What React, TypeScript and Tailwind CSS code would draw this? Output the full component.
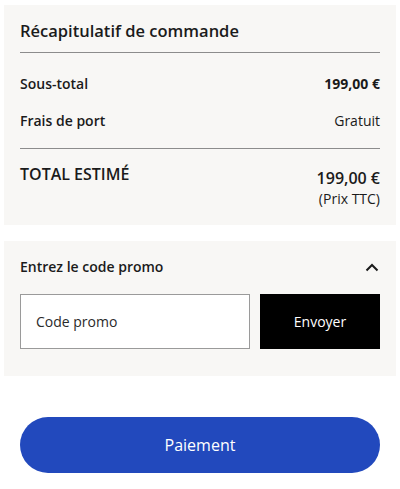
export default function App() {
  return (
    <div className="min-h-screen bg-white px-1 pt-[5px] text-[#1b1b1b] [font-family:'Open_Sans',sans-serif]">
      <section className="bg-[#f8f7f5] px-4 pt-[15px] pb-[16px]">
        <h2 className="text-[16.5px] font-semibold leading-[22px]">Récapitulatif de commande</h2>
        <div className="mt-[10px] h-px bg-[#8c8c8c]" />
        <div className="mt-[21px] flex items-center justify-between text-[14px] leading-5">
          <span className="font-semibold">Sous-total</span>
          <span className="font-bold">199,00 €</span>
        </div>
        <div className="mt-[17px] flex items-center justify-between text-[14px] leading-5">
          <span className="font-semibold">Frais de port</span>
          <span>Gratuit</span>
        </div>
        <div className="mt-[17px] h-px bg-[#8c8c8c]" />
        <div className="mt-[14px] flex items-start justify-between">
          <span className="text-[16px] font-semibold leading-[22px]">TOTAL ESTIMÉ</span>
          <div className="flex flex-col items-end">
            <span className="mt-[4px] text-[16px] font-semibold leading-[22px]">199,00 €</span>
            <span className="text-[14px] leading-5">(Prix TTC)</span>
          </div>
        </div>
      </section>

      <section className="mt-4 bg-[#f8f7f5] px-4 pt-[16px] pb-[27px]">
        <div className="flex items-center justify-between">
          <span className="text-[14px] font-semibold leading-5">Entrez le code promo</span>
          <svg width="14" height="9" viewBox="0 0 14 9" className="mr-[1px]">
            <path d="M1.5 7.5L7 2l5.5 5.5" fill="none" stroke="#1b1b1b" strokeWidth="2" />
          </svg>
        </div>
        <div className="mt-[17px] flex gap-[10px]">
          <input
            className="h-[55px] flex-1 border border-[#9a9a9a] bg-white px-[15px] text-[14px] text-[#1b1b1b] outline-none placeholder:text-[#2a2a2a]"
            placeholder="Code promo"
          />
          <button className="h-[55px] w-[120px] bg-black text-[14px] font-medium text-white">Envoyer</button>
        </div>
      </section>

      <div className="px-4 pt-[41px]">
        <button className="h-[56px] w-full rounded-full bg-[#2249bd] text-[16px] font-medium text-white">
          Paiement
        </button>
      </div>
    </div>
  );
}
